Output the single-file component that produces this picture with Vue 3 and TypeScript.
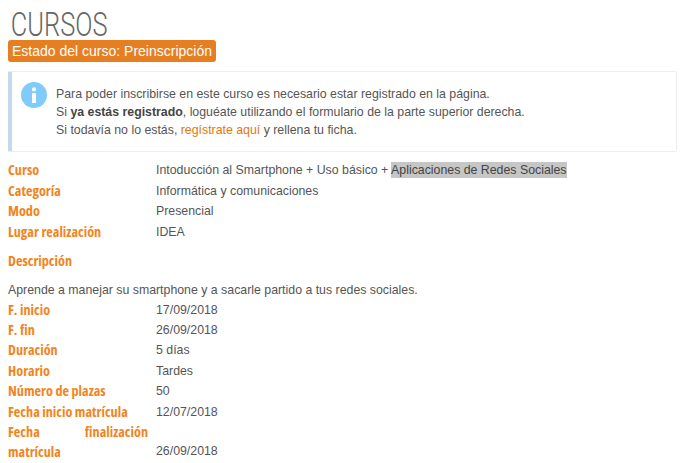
<script setup lang="ts">
interface Row { label: string; value: string }
const top: Row[] = [
  { label: 'Categoría', value: 'Informática y comunicaciones' },
  { label: 'Modo', value: 'Presencial' },
  { label: 'Lugar realización', value: 'IDEA' },
]
const rest: Row[] = [
  { label: 'F. inicio', value: '17/09/2018' },
  { label: 'F. fin', value: '26/09/2018' },
  { label: 'Duración', value: '5 días' },
  { label: 'Horario', value: 'Tardes' },
  { label: 'Número de plazas', value: '50' },
  { label: 'Fecha inicio matrícula', value: '12/07/2018' },
]
</script>

<template>
  <main class="page">
    <h1 class="title">CURSOS</h1>
    <div class="badge">Estado del curso: Preinscripción</div>
    <section class="notice">
      <svg class="icon" viewBox="0 0 26 26" width="26" height="26" aria-hidden="true">
        <circle cx="13" cy="13" r="13" fill="#7fcbfb" />
        <circle cx="13" cy="7.4" r="2.1" fill="#fff" />
        <rect x="11" y="11" width="4" height="10" rx="0.6" fill="#fff" />
      </svg>
      <div class="notice-text">
        <div>Para poder inscribirse en este curso es necesario estar registrado en la página.</div>
        <div>Si <b>ya estás registrado</b>, loguéate utilizando el formulario de la parte superior derecha.</div>
        <div>Si todavía no lo estás, <a class="link">regístrate aquí</a> y rellena tu ficha.</div>
      </div>
    </section>
    <dl class="list first">
      <dt>Curso</dt>
      <dd>Intoducción al Smartphone + Uso básico + <mark class="sel">Aplicaciones de Redes Sociales</mark></dd>
      <template v-for="r in top" :key="r.label">
        <dt>{{ r.label }}</dt>
        <dd>{{ r.value }}</dd>
      </template>
    </dl>
    <h2 class="desc-title">Descripción</h2>
    <p class="desc">Aprende a manejar su smartphone y a sacarle partido a tus redes sociales.</p>
    <dl class="list">
      <template v-for="r in rest" :key="r.label">
        <dt>{{ r.label }}</dt>
        <dd>{{ r.value }}</dd>
      </template>
      <dt class="wrap">Fecha finalización matrícula</dt>
      <dd class="bottom">26/09/2018</dd>
    </dl>
  </main>
</template>

<style>
html, body { margin: 0; background: #fff; overflow: hidden; }
</style>

<style scoped>
.page {
  width: 680px;
  height: 463px;
  box-sizing: border-box;
  padding: 9px 0 0 8px;
  overflow: hidden;
  font-family: "Liberation Sans", Arial, sans-serif;
  font-size: 12.33px;
  color: #555;
}
.title {
  margin: 0;
  height: 31px;
  padding-left: 3px;
  font-family: Roboto, sans-serif;
  font-weight: 300;
  font-size: 33px;
  line-height: 31px;
  color: #666;
  transform: scaleX(0.77);
  transform-origin: 2px center;
}
.badge {
  display: inline-block;
  padding: 0 4px;
  height: 22px;
  line-height: 22px;
  background: #e67e22;
  color: #fff;
  border-radius: 3px;
  font-size: 14px;
}
.notice {
  display: flex;
  align-items: flex-start;
  box-sizing: border-box;
  width: 669px;
  height: 81px;
  margin-top: 9px;
  padding: 10px 0 0 9px;
  background: #fff;
  border: 1px solid #eee;
  border-left: 4px solid #c5d9ec;
  border-radius: 2px;
}
.icon { flex: none; }
.notice-text {
  margin-left: 9px;
  padding-top: 3px;
  line-height: 18px;
}
.notice-text b { color: #444; }
.link { color: #e8760c; }
.list {
  display: grid;
  grid-template-columns: 148px 1fr;
  grid-auto-rows: minmax(20.4px, auto);
  margin: 0;
  width: 660px;
}
.list.first { margin-top: 8.4px; }
dt {
  font-family: "Open Sans", sans-serif;
  font-weight: 700;
  font-stretch: condensed;
  font-size: 14.2px;
  line-height: 20.4px;
  color: #f28420;
}
dd {
  margin: 0;
  line-height: 20.4px;
}
.sel { background: #c6c6c6; color: #444; padding: 1px 0; }
.wrap {
  width: 140px;
  text-align: justify;
  line-height: 19.5px;
}
.bottom { align-self: end; }
.desc-title {
  margin: 8.6px 0 0;
  font-family: "Open Sans", sans-serif;
  font-weight: 700;
  font-stretch: condensed;
  font-size: 14.2px;
  line-height: 20px;
  color: #f28420;
}
.desc {
  margin: 9px 0 0;
  line-height: 20px;
}
</style>
